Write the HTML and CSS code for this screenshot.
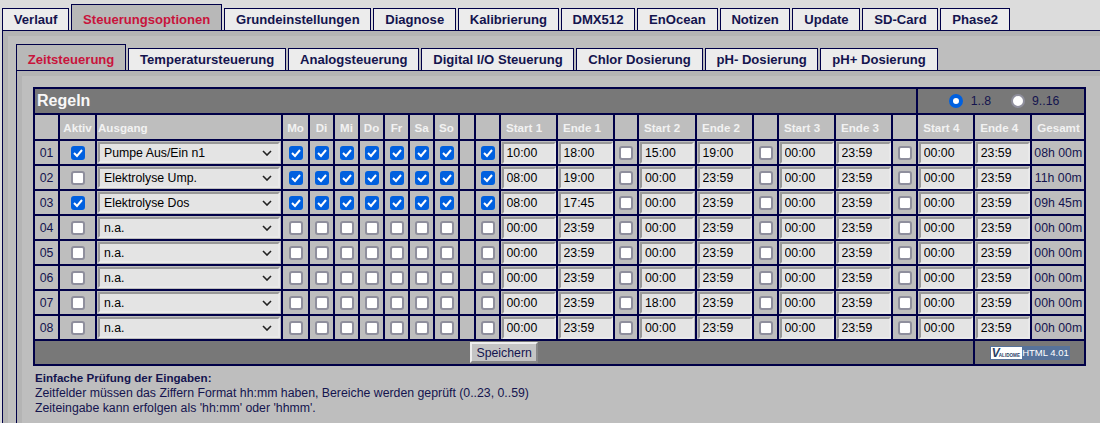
FILE: index.html
```html
<!DOCTYPE html>
<html lang="de">
<head>
    <meta charset="UTF-8">
    <title>Steuerungsoptionen</title>
    <link rel="stylesheet" href="styles.css">
</head>
<body>
    <div class="tabs tabs-main">
        <a class="tab">Verlauf</a>
        <a class="tab active">Steuerungsoptionen</a>
        <a class="tab">Grundeinstellungen</a>
        <a class="tab">Diagnose</a>
        <a class="tab">Kalibrierung</a>
        <a class="tab">DMX512</a>
        <a class="tab">EnOcean</a>
        <a class="tab">Notizen</a>
        <a class="tab">Update</a>
        <a class="tab">SD-Card</a>
        <a class="tab">Phase2</a>
    </div>
    <div class="panel">
        <div class="panel-inner">
            <div class="tabs tabs-sub">
                <a class="tab active">Zeitsteuerung</a>
                <a class="tab">Temperatursteuerung</a>
                <a class="tab">Analogsteuerung</a>
                <a class="tab">Digital I/O Steuerung</a>
                <a class="tab">Chlor Dosierung</a>
                <a class="tab">pH- Dosierung</a>
                <a class="tab">pH+ Dosierung</a>
            </div>
            <div class="panel sub-panel">
                <div class="panel-inner">
                    <table class="rules">
                        <colgroup>
                            <col class="w25"><col class="w37"><col class="w186"><col class="w27">
                            <col class="w25"><col class="w25"><col class="w25"><col class="w25"><col class="w25"><col class="w25">
                            <col class="w16"><col class="w25">
                            <col class="w57"><col class="w57"><col class="w24"><col class="w58"><col class="w57">
                            <col class="w25"><col class="w57"><col class="w57"><col class="w25">
                            <col class="w57"><col class="w57"><col class="w54">
                        </colgroup>
                        <tr class="bar">
                            <td colspan="21" class="title">Regeln</td>
                            <td colspan="3" class="range">
                                <label><input type="radio" name="range" checked> 1..8</label>
                                <label><input type="radio" name="range"> 9..16</label>
                            </td>
                        </tr>
                        <tr class="head">
                            <th></th><th class="c">Aktiv</th><th class="output">Ausgang</th>
                            <th class="c">Mo</th><th class="c">Di</th><th class="c">Mi</th><th class="c">Do</th><th class="c">Fr</th><th class="c">Sa</th><th class="c">So</th>
                            <th></th><th></th>
                            <th>Start 1</th><th>Ende 1</th><th></th>
                            <th>Start 2</th><th>Ende 2</th><th></th>
                            <th>Start 3</th><th>Ende 3</th><th></th>
                            <th>Start 4</th><th>Ende 4</th><th>Gesamt</th>
                        </tr>
                        <tr>
                            <td class="no">01</td><td class="c"><input type="checkbox" checked></td>
                            <td><div class="select">Pumpe Aus/Ein n1</div></td>
                            <td class="c"><input type="checkbox" checked></td><td class="c"><input type="checkbox" checked></td><td class="c"><input type="checkbox" checked></td><td class="c"><input type="checkbox" checked></td><td class="c"><input type="checkbox" checked></td><td class="c"><input type="checkbox" checked></td><td class="c"><input type="checkbox" checked></td>
                            <td></td><td class="c"><input type="checkbox" checked></td>
                            <td><input type="text" value="10:00"></td><td><input type="text" value="18:00"></td><td class="c"><input type="checkbox"></td>
                            <td><input type="text" value="15:00"></td><td><input type="text" value="19:00"></td><td class="c"><input type="checkbox"></td>
                            <td><input type="text" value="00:00"></td><td><input type="text" value="23:59"></td><td class="c"><input type="checkbox"></td>
                            <td><input type="text" value="00:00"></td><td><input type="text" value="23:59"></td><td class="total">08h 00m</td>
                        </tr>
                        <tr>
                            <td class="no">02</td><td class="c"><input type="checkbox"></td>
                            <td><div class="select">Elektrolyse Ump.</div></td>
                            <td class="c"><input type="checkbox" checked></td><td class="c"><input type="checkbox" checked></td><td class="c"><input type="checkbox" checked></td><td class="c"><input type="checkbox" checked></td><td class="c"><input type="checkbox" checked></td><td class="c"><input type="checkbox" checked></td><td class="c"><input type="checkbox" checked></td>
                            <td></td><td class="c"><input type="checkbox" checked></td>
                            <td><input type="text" value="08:00"></td><td><input type="text" value="19:00"></td><td class="c"><input type="checkbox"></td>
                            <td><input type="text" value="00:00"></td><td><input type="text" value="23:59"></td><td class="c"><input type="checkbox"></td>
                            <td><input type="text" value="00:00"></td><td><input type="text" value="23:59"></td><td class="c"><input type="checkbox"></td>
                            <td><input type="text" value="00:00"></td><td><input type="text" value="23:59"></td><td class="total">11h 00m</td>
                        </tr>
                        <tr>
                            <td class="no">03</td><td class="c"><input type="checkbox" checked></td>
                            <td><div class="select">Elektrolyse Dos</div></td>
                            <td class="c"><input type="checkbox" checked></td><td class="c"><input type="checkbox" checked></td><td class="c"><input type="checkbox" checked></td><td class="c"><input type="checkbox" checked></td><td class="c"><input type="checkbox" checked></td><td class="c"><input type="checkbox" checked></td><td class="c"><input type="checkbox" checked></td>
                            <td></td><td class="c"><input type="checkbox" checked></td>
                            <td><input type="text" value="08:00"></td><td><input type="text" value="17:45"></td><td class="c"><input type="checkbox"></td>
                            <td><input type="text" value="00:00"></td><td><input type="text" value="23:59"></td><td class="c"><input type="checkbox"></td>
                            <td><input type="text" value="00:00"></td><td><input type="text" value="23:59"></td><td class="c"><input type="checkbox"></td>
                            <td><input type="text" value="00:00"></td><td><input type="text" value="23:59"></td><td class="total">09h 45m</td>
                        </tr>
                        <tr>
                            <td class="no">04</td><td class="c"><input type="checkbox"></td>
                            <td><div class="select">n.a.</div></td>
                            <td class="c"><input type="checkbox"></td><td class="c"><input type="checkbox"></td><td class="c"><input type="checkbox"></td><td class="c"><input type="checkbox"></td><td class="c"><input type="checkbox"></td><td class="c"><input type="checkbox"></td><td class="c"><input type="checkbox"></td>
                            <td></td><td class="c"><input type="checkbox"></td>
                            <td><input type="text" value="00:00"></td><td><input type="text" value="23:59"></td><td class="c"><input type="checkbox"></td>
                            <td><input type="text" value="00:00"></td><td><input type="text" value="23:59"></td><td class="c"><input type="checkbox"></td>
                            <td><input type="text" value="00:00"></td><td><input type="text" value="23:59"></td><td class="c"><input type="checkbox"></td>
                            <td><input type="text" value="00:00"></td><td><input type="text" value="23:59"></td><td class="total">00h 00m</td>
                        </tr>
                        <tr>
                            <td class="no">05</td><td class="c"><input type="checkbox"></td>
                            <td><div class="select">n.a.</div></td>
                            <td class="c"><input type="checkbox"></td><td class="c"><input type="checkbox"></td><td class="c"><input type="checkbox"></td><td class="c"><input type="checkbox"></td><td class="c"><input type="checkbox"></td><td class="c"><input type="checkbox"></td><td class="c"><input type="checkbox"></td>
                            <td></td><td class="c"><input type="checkbox"></td>
                            <td><input type="text" value="00:00"></td><td><input type="text" value="23:59"></td><td class="c"><input type="checkbox"></td>
                            <td><input type="text" value="00:00"></td><td><input type="text" value="23:59"></td><td class="c"><input type="checkbox"></td>
                            <td><input type="text" value="00:00"></td><td><input type="text" value="23:59"></td><td class="c"><input type="checkbox"></td>
                            <td><input type="text" value="00:00"></td><td><input type="text" value="23:59"></td><td class="total">00h 00m</td>
                        </tr>
                        <tr>
                            <td class="no">06</td><td class="c"><input type="checkbox"></td>
                            <td><div class="select">n.a.</div></td>
                            <td class="c"><input type="checkbox"></td><td class="c"><input type="checkbox"></td><td class="c"><input type="checkbox"></td><td class="c"><input type="checkbox"></td><td class="c"><input type="checkbox"></td><td class="c"><input type="checkbox"></td><td class="c"><input type="checkbox"></td>
                            <td></td><td class="c"><input type="checkbox"></td>
                            <td><input type="text" value="00:00"></td><td><input type="text" value="23:59"></td><td class="c"><input type="checkbox"></td>
                            <td><input type="text" value="00:00"></td><td><input type="text" value="23:59"></td><td class="c"><input type="checkbox"></td>
                            <td><input type="text" value="00:00"></td><td><input type="text" value="23:59"></td><td class="c"><input type="checkbox"></td>
                            <td><input type="text" value="00:00"></td><td><input type="text" value="23:59"></td><td class="total">00h 00m</td>
                        </tr>
                        <tr>
                            <td class="no">07</td><td class="c"><input type="checkbox"></td>
                            <td><div class="select">n.a.</div></td>
                            <td class="c"><input type="checkbox"></td><td class="c"><input type="checkbox"></td><td class="c"><input type="checkbox"></td><td class="c"><input type="checkbox"></td><td class="c"><input type="checkbox"></td><td class="c"><input type="checkbox"></td><td class="c"><input type="checkbox"></td>
                            <td></td><td class="c"><input type="checkbox"></td>
                            <td><input type="text" value="00:00"></td><td><input type="text" value="23:59"></td><td class="c"><input type="checkbox"></td>
                            <td><input type="text" value="18:00"></td><td><input type="text" value="23:59"></td><td class="c"><input type="checkbox"></td>
                            <td><input type="text" value="00:00"></td><td><input type="text" value="23:59"></td><td class="c"><input type="checkbox"></td>
                            <td><input type="text" value="00:00"></td><td><input type="text" value="23:59"></td><td class="total">00h 00m</td>
                        </tr>
                        <tr>
                            <td class="no">08</td><td class="c"><input type="checkbox"></td>
                            <td><div class="select">n.a.</div></td>
                            <td class="c"><input type="checkbox"></td><td class="c"><input type="checkbox"></td><td class="c"><input type="checkbox"></td><td class="c"><input type="checkbox"></td><td class="c"><input type="checkbox"></td><td class="c"><input type="checkbox"></td><td class="c"><input type="checkbox"></td>
                            <td></td><td class="c"><input type="checkbox"></td>
                            <td><input type="text" value="00:00"></td><td><input type="text" value="23:59"></td><td class="c"><input type="checkbox"></td>
                            <td><input type="text" value="00:00"></td><td><input type="text" value="23:59"></td><td class="c"><input type="checkbox"></td>
                            <td><input type="text" value="00:00"></td><td><input type="text" value="23:59"></td><td class="c"><input type="checkbox"></td>
                            <td><input type="text" value="00:00"></td><td><input type="text" value="23:59"></td><td class="total">00h 00m</td>
                        </tr>
                        <tr class="bar foot">
                            <td colspan="22" class="c"><button type="button">Speichern</button></td>
                            <td colspan="2" class="c">
                                <span class="badge"><span class="badge-logo"><b>V</b>ALIDOME</span><span class="badge-html">HTML 4.01</span></span>
                            </td>
                        </tr>
                    </table>
                    <div class="notes">
                        <b>Einfache Prüfung der Eingaben:</b><br>
                        Zeitfelder müssen das Ziffern Format hh:mm haben, Bereiche werden geprüft (0..23, 0..59)<br>
                        Zeiteingabe kann erfolgen als 'hh:mm' oder 'hhmm'.
                    </div>
                </div>
            </div>
        </div>
    </div>
</body>
</html>
```

FILE: styles.css
```css
html, body {
    height: 100%;
    overflow: hidden;
}

body {
    margin: 0;
    background-color: #dcdcdc;
    font-family: "Liberation Sans", Arial, sans-serif;
    font-size: 12.3px;
    color: #14144e;
}

/* Reiter */
.tabs {
    display: flex;
    align-items: flex-end;
    gap: 2px;
}

.tabs-main {
    height: 30px;
    padding-left: 2px;
    box-sizing: border-box;
}

.tabs-sub {
    height: 34px;
}

.tab {
    height: 21px;
    line-height: 22px;
    padding: 0 10.8px;
    background-color: #ececec;
    border: 1px solid #000048;
    border-bottom: 0;
    font-size: 13.1px;
    font-weight: bold;
    color: #14144e;
    white-space: nowrap;
}

.tab.active {
    height: 25px;
    line-height: 29px;
    background-color: #b8b8b8;
    color: #c8143c;
}

/* Flaechen */
.panel {
    background-color: #bebebe;
    border-top: 1px solid #000048;
    border-left: 1px solid #000048;
    margin-left: 2px;
}

.panel-inner {
    border-top: 5px solid #b4b4b4;
    border-left: 5px solid #b4b4b4;
    padding: 0 0 0 8px;
    height: 387px;
}

.sub-panel {
    margin-left: 0;
}

.sub-panel .panel-inner {
    padding: 11px 0 0 11px;
    height: 336px;
}

/* Tabelle */
.rules {
    border-collapse: collapse;
    table-layout: fixed;
    width: 1053px;
}

.rules td, .rules th {
    border: 2px solid #000048;
    padding: 0;
    height: 23px;
}

.rules th {
    text-align: left;
    padding-left: 5px;
    color: #f2f2f2;
    font-size: 11.6px;
}

.rules .bar td, .rules .head th {
    height: 24px;
}

.rules .c {
    text-align: center;
    padding-left: 0;
}

.rules .output {
    padding-left: 1px;
}

.w16 { width: 16px; }
.w24 { width: 24px; }
.w25 { width: 25px; }
.w27 { width: 27px; }
.w37 { width: 37px; }
.w54 { width: 54px; }
.w57 { width: 57px; }
.w58 { width: 58px; }
.w186 { width: 186px; }

.bar td {
    background-color: #787878;
}

.rules .foot td {
    height: 23px;
}

.rules .title {
    font-size: 16px;
    font-weight: bold;
    color: #f8f8f8;
    padding-left: 2px;
}

.rules .range {
    padding-left: 31px;
    white-space: nowrap;
}

.range label + label {
    margin-left: 16px;
}

.no {
    text-align: center;
}

.rules .total {
    text-align: center;
    white-space: nowrap;
}

/* Eingabefelder */
input[type="text"], .select {
    display: block;
    box-sizing: border-box;
    margin: 0 auto;
    background-color: #e4e4e4;
    border: 2px solid;
    border-color: #999 #e9e9e9 #e9e9e9 #999;
    font-family: inherit;
    font-size: 12.3px;
    color: #000;
}

input[type="text"] {
    width: 54px;
    height: 22px;
    padding: 0 3px;
}

.select {
    width: 182px;
    height: 21px;
    line-height: 18px;
    padding-left: 4px;
    background-image: url("data:image/svg+xml,%3Csvg xmlns='http://www.w3.org/2000/svg' width='10' height='6'%3E%3Cpath d='M1 1l4 4 4-4' fill='none' stroke='%23222' stroke-width='1.6'/%3E%3C/svg%3E");
    background-repeat: no-repeat;
    background-position: right 6px center;
}

input[type="checkbox"], input[type="radio"] {
    appearance: none;
    box-sizing: border-box;
    width: 14px;
    height: 14px;
    margin: 0;
    vertical-align: middle;
    background-color: #fff;
    border: 2px solid #8f8f9d;
}

input[type="checkbox"] {
    border-radius: 3px;
}

input[type="checkbox"]:checked {
    background-color: #0060df;
    border-color: #0060df;
    background-image: url("data:image/svg+xml,%3Csvg xmlns='http://www.w3.org/2000/svg' width='10' height='10'%3E%3Cpath d='M1 5l3 3 5-6' fill='none' stroke='%23fff' stroke-width='2'/%3E%3C/svg%3E");
    background-repeat: no-repeat;
    background-position: center;
}

input[type="radio"] {
    border-radius: 50%;
    margin-right: 4px;
}

input[type="radio"]:checked {
    border: 4px solid #0060df;
}

button {
    height: 21px;
    width: 68px;
    padding: 0;
    background-color: #c4c4c4;
    border: 2px solid;
    border-color: #eee #888 #888 #eee;
    font-family: inherit;
    font-size: 12.3px;
    color: #14144e;
}

/* Validome Logo */
.badge {
    display: inline-flex;
    height: 14px;
    width: 80px;
    box-sizing: border-box;
    border: 1px solid #56729a;
    background-color: #fff;
    vertical-align: middle;
    line-height: 12px;
    text-align: left;
}

.badge-logo {
    width: 32px;
    padding-left: 1px;
    box-sizing: border-box;
    font-size: 4.6px;
    font-weight: bold;
    color: #2a3f66;
    white-space: nowrap;
}

.badge-logo b {
    margin-right: -1px;
    font-size: 12px;
    font-style: italic;
}

.badge-html {
    flex: 1;
    background-color: #56729a;
    color: #fff;
    font-size: 9.5px;
    text-align: center;
    white-space: nowrap;
}

.notes {
    margin-top: 4px;
    padding-left: 2px;
    line-height: 15px;
}

.notes b {
    font-size: 11.6px;
}
```
